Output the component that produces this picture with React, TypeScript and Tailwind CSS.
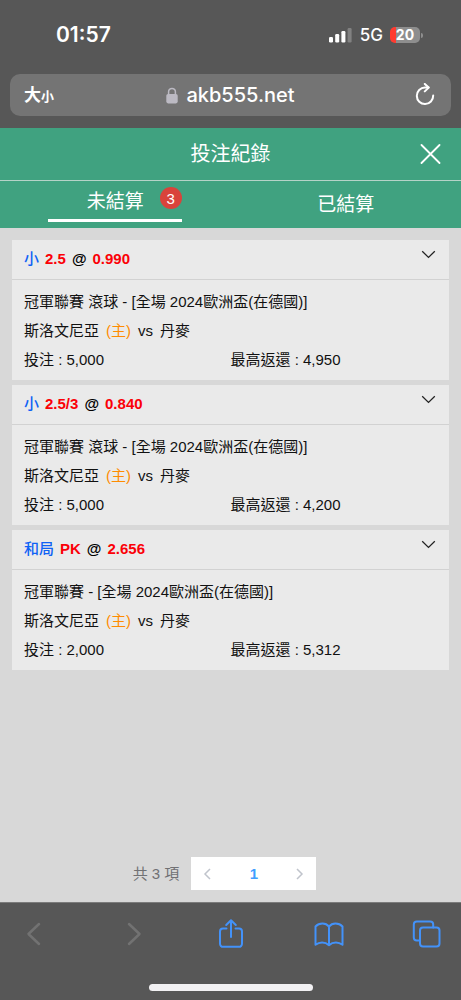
interface Bet {
  id: number;
  pick: string;
  line: string;
  odds: string;
  league: string;
  home: string;
  away: string;
  stake: string;
  payout: string;
}

const bets: Bet[] = [
  { id: 1, pick: '小', line: '2.5', odds: '0.990', league: '冠軍聯賽 滾球', home: '斯洛文尼亞', away: '丹麥', stake: '5,000', payout: '4,950' },
  { id: 2, pick: '小', line: '2.5/3', odds: '0.840', league: '冠軍聯賽 滾球', home: '斯洛文尼亞', away: '丹麥', stake: '5,000', payout: '4,200' },
  { id: 3, pick: '和局', line: 'PK', odds: '2.656', league: '冠軍聯賽', home: '斯洛文尼亞', away: '丹麥', stake: '2,000', payout: '5,312' },
];

function StatusBar() {
  return (
    <div className="flex h-[74px] items-center justify-between pr-[38px] pb-1 pl-[56px] text-white">
      <span className="text-[21px] leading-6 font-semibold">01:57</span>
      <div className="flex items-center">
        <svg width="23" height="16" viewBox="0 0 23 16" fill="currentColor" aria-hidden="true">
          <rect x="0" y="10" width="4" height="5.5" rx="1.2" />
          <rect x="6.2" y="7" width="4" height="8.5" rx="1.2" />
          <rect x="12.4" y="4" width="4" height="11.5" rx="1.2" />
          <rect x="18.6" y="1" width="4" height="14.5" rx="1.2" opacity="0.25" />
        </svg>
        <span className="ml-2 text-[17px] leading-6 font-medium">5G</span>
        <div className="ml-[7px] flex items-center">
          <div className="flex h-4 w-[30px] items-center justify-center rounded-[5px] bg-linear-to-r from-[#ff3b30] from-20% to-[#8e8e8e] to-20% text-[14px] leading-4 font-bold">
            20
          </div>
          <div className="ml-px h-[5px] w-0.5 rounded-r-full bg-[#8e8e8e]" />
        </div>
      </div>
    </div>
  );
}

function AddressBar() {
  return (
    <div className="px-[10px] pb-3">
      <div className="grid h-[42px] grid-cols-[1fr_auto_1fr] items-center rounded-[10px] bg-[#747474] px-[14px] text-white">
        <button type="button" className="flex items-baseline justify-self-start text-[17px] leading-6 font-bold">
          大<span className="text-[13px]">小</span>
        </button>
        <div className="flex items-center gap-2">
          <svg width="12" height="17" viewBox="0 0 12 17" aria-hidden="true">
            <path d="M2.6 8V4.8a3.4 3.4 0 0 1 6.8 0V8" fill="none" stroke="#bcbac3" strokeWidth="1.5" />
            <rect x="0.3" y="7" width="11.4" height="9.4" rx="1.8" fill="#bcbac3" />
          </svg>
          <span className="text-[20px] leading-6 font-medium">akb555.net</span>
        </div>
        <button type="button" aria-label="重新載入" className="justify-self-end">
          <svg width="22" height="24" viewBox="0 0 22 24" fill="none" stroke="currentColor" strokeWidth="2" strokeLinecap="round" strokeLinejoin="round">
            <path d="M18.2 12.6A8.2 8.2 0 1 1 10 4.600H13.500" />
            <path d="M9.800 0.900l3.900 3.700-3.900 3.800" />
          </svg>
        </button>
      </div>
    </div>
  );
}

function Tabs() {
  return (
    <div className="grid h-[47px] grid-cols-2 text-[19px] leading-7">
      <button type="button" className="flex flex-col items-center">
        <span className="relative mt-[7px]">
          未結算
          <span className="absolute -top-px left-full ml-4 flex size-[22px] items-center justify-center rounded-full bg-[#d9433b] text-[15px] leading-none">
            3
          </span>
        </span>
        <span className="mt-[3px] h-[3px] w-[134px] bg-white" />
      </button>
      <button type="button" className="flex items-center justify-center pt-px">已結算</button>
    </div>
  );
}

function BetCard({ bet }: { bet: Bet }) {
  return (
    <article className="bg-[#eaeaea] text-[15px] text-[#111]">
      <header className="flex h-10 justify-between border-b border-[#d2d2d2] pr-[13px] pl-3">
        <h2 className="flex items-center gap-[6px] font-bold text-[#fb0007]">
          <span className="font-medium text-[#0f62f5]">{bet.pick}</span>
          <span>{bet.line}</span>
          <span className="text-black">@</span>
          <span>{bet.odds}</span>
        </h2>
        <button type="button" aria-label="展開" className="self-start pt-[10px]">
          <svg width="15" height="9" viewBox="0 0 15 9" fill="none" stroke="#222" strokeWidth="1.3">
            <path d="M1.2 1.2l6.3 6.2 6.3-6.2" />
          </svg>
        </button>
      </header>
      <div className="px-3 pt-[7px] pb-[6px] leading-[29px]">
        <p>{bet.league} - [全場 2024歐洲盃(在德國)]</p>
        <p className="flex gap-[7px]">
          <span>{bet.home}</span>
          <span className="text-[#ff8c00]">(主)</span>
          <span>vs</span>
          <span>{bet.away}</span>
        </p>
        <div className="grid grid-cols-2">
          <p>投注 : {bet.stake}</p>
          <p>最高返還 : {bet.payout}</p>
        </div>
      </div>
    </article>
  );
}

function Pager() {
  return (
    <nav className="flex items-center justify-center gap-3 pr-3 text-[15px] leading-6">
      <span className="text-[#707174]">共 3 項</span>
      <div className="flex h-[33px] w-[125px] items-center justify-between bg-white px-3">
        <button type="button" aria-label="上一頁">
          <svg width="8" height="12" viewBox="0 0 8 12" fill="none" stroke="#c0c4cc" strokeWidth="1.5">
            <path d="M7 1L2 6l5 5" />
          </svg>
        </button>
        <button type="button" className="font-bold text-[#409eff]">1</button>
        <button type="button" aria-label="下一頁">
          <svg width="8" height="12" viewBox="0 0 8 12" fill="none" stroke="#c0c4cc" strokeWidth="1.5">
            <path d="M1 1l5 5-5 5" />
          </svg>
        </button>
      </div>
    </nav>
  );
}

function Toolbar() {
  return (
    <footer className="flex h-[98px] flex-col items-center justify-between border-t border-[#7b7b7b] bg-[#575757] pt-[15px] pb-[9px]">
      <div className="flex w-full items-center justify-between px-[19px] text-[#4392f9]">
        <button type="button" aria-label="返回" className="text-[#727272]">
          <svg width="30" height="32" viewBox="0 0 30 32" fill="none" stroke="currentColor" strokeWidth="2.5" strokeLinecap="round" strokeLinejoin="round">
            <path d="M20 6L9.5 16 20 26" />
          </svg>
        </button>
        <button type="button" aria-label="前進" className="text-[#727272]">
          <svg width="30" height="32" viewBox="0 0 30 32" fill="none" stroke="currentColor" strokeWidth="2.5" strokeLinecap="round" strokeLinejoin="round">
            <path d="M12 6l10.500 10L12 26" />
          </svg>
        </button>
        <button type="button" aria-label="分享">
          <svg width="30" height="32" viewBox="0 0 30 32" fill="none" stroke="currentColor" strokeWidth="2" strokeLinecap="round" strokeLinejoin="round">
            <path d="M10.500 10.500H7a3 3 0 0 0-3 3v12.300a3 3 0 0 0 3 3h16a3 3 0 0 0 3-3V13.500a3 3 0 0 0-3-3H19.500" />
            <path d="M15 19V2.500M10.200 7L15 2.200 19.800 7" />
          </svg>
        </button>
        <button type="button" aria-label="書籤">
          <svg width="30" height="32" viewBox="0 0 30 32" fill="none" stroke="currentColor" strokeWidth="2" strokeLinecap="round" strokeLinejoin="round">
            <path d="M15 8.500C13.200 6.300 11 5.500 8.500 5.500S3.500 6.300 1.500 8.500v18.300c2-1.500 4-2.300 6.600-2.300s4.900.9 6.900 2.700c2-1.800 4.300-2.700 6.900-2.700s4.600.8 6.600 2.300V8.500c-2-2.200-4.500-3-7-3s-4.700.8-6.500 3zM15 8.500v18.700" />
          </svg>
        </button>
        <button type="button" aria-label="分頁">
          <svg width="30" height="32" viewBox="0 0 30 32" fill="none" stroke="currentColor" strokeWidth="2" strokeLinecap="round" strokeLinejoin="round">
            <rect x="8" y="9.500" width="19.500" height="19" rx="3" />
            <path d="M8 22.500H4.800a3 3 0 0 1-3-3V6.500a3 3 0 0 1 3-3h13.400a3 3 0 0 1 3 3v3" />
          </svg>
        </button>
      </div>
      <div className="h-[7px] w-[164px] rounded-full bg-[#f2f1f3]" />
    </footer>
  );
}

export default function App() {
  return (
    <div className="flex min-h-screen flex-col bg-[#d8d8d8] font-['Liberation_Sans','Noto_Sans_CJK_TC',sans-serif]">
      <div className="bg-[#575757] font-['Inter','Noto_Sans_CJK_TC',sans-serif]">
        <StatusBar />
        <AddressBar />
      </div>
      <header className="bg-[#40a280] text-white">
        <div className="grid h-[53px] grid-cols-[1fr_auto_1fr] items-center border-b border-[#b5d3c8] px-5">
          <h1 className="col-start-2 text-[20px] leading-7">投注紀錄</h1>
          <button type="button" aria-label="關閉" className="justify-self-end">
            <svg width="21" height="20" viewBox="0 0 21 20" fill="none" stroke="currentColor" strokeWidth="1.8" strokeLinecap="round">
              <path d="M1.500 1l18 18M19.500 1l-18 18" />
            </svg>
          </button>
        </div>
        <Tabs />
      </header>
      <main className="flex flex-1 flex-col justify-between gap-6 px-3 py-3">
        <div className="flex flex-col gap-[5px]">
          {bets.map((bet) => (
            <BetCard key={bet.id} bet={bet} />
          ))}
        </div>
        <Pager />
      </main>
      <Toolbar />
    </div>
  );
}
